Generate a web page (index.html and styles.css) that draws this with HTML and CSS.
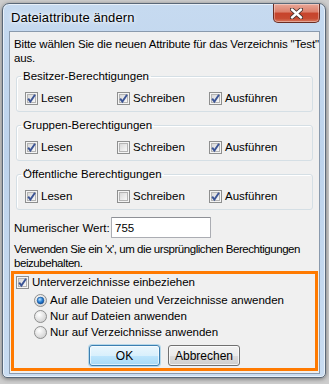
FILE: index.html
```html
<!DOCTYPE html>
<html lang="de">
<head>
  <meta charset="UTF-8" />
  <title>Dateiattribute ändern</title>
  <link rel="stylesheet" href="styles.css">
</head>
<body>

  <!-- Symbole für Checkbox / Radio -->
  <svg class="defs" width="0" height="0">
    <defs>
      <linearGradient id="boxfill" x1="0" y1="0" x2="1" y2="1">
        <stop offset="0" stop-color="#d6d6d6"/>
        <stop offset="1" stop-color="#fbfbfb"/>
      </linearGradient>
      <radialGradient id="radfill" cx="0.4" cy="0.35" r="0.7">
        <stop offset="0" stop-color="#ffffff"/>
        <stop offset="1" stop-color="#cfcfcf"/>
      </radialGradient>
      <radialGradient id="dotfill" cx="0.4" cy="0.35" r="0.7">
        <stop offset="0" stop-color="#b6e3ff"/>
        <stop offset="0.55" stop-color="#2a7fd4"/>
        <stop offset="1" stop-color="#0e4a95"/>
      </radialGradient>
      <symbol id="box" viewBox="0 0 13 13">
        <rect x="0.5" y="0.5" width="12" height="12" fill="#f4f4f4" stroke="#8e8f8f"/>
        <rect x="2.5" y="2.5" width="8" height="8" fill="url(#boxfill)" stroke="#b4b4b4"/>
      </symbol>
      <symbol id="check" viewBox="0 0 13 13">
        <use href="#box"/>
        <path d="M3.2 6.6 L5.4 9.6 L10 2.8" fill="none" stroke="#3b5495" stroke-width="1.9"/>
      </symbol>
      <symbol id="radio" viewBox="0 0 13 13">
        <circle cx="6.5" cy="6.5" r="6" fill="url(#radfill)" stroke="#8e8f8f"/>
      </symbol>
      <symbol id="radio-on" viewBox="0 0 13 13">
        <circle cx="6.5" cy="6.5" r="6" fill="url(#radfill)" stroke="#8e8f8f"/>
        <circle cx="6.5" cy="6.5" r="3.4" fill="url(#dotfill)" stroke="#174f8e" stroke-width="0.6"/>
      </symbol>
    </defs>
  </svg>

  <div class="window">

    <!-- Titelleiste -->
    <div class="titlebar">
      <span class="title">Dateiattribute ändern</span>
      <button class="close">
        <svg width="13" height="11" viewBox="0 0 13 11">
          <path d="M2 1.5 L11 9.5 M11 1.5 L2 9.5" stroke="#43302c" stroke-width="4.2" stroke-linecap="round"/>
          <path d="M2 1.5 L11 9.5 M11 1.5 L2 9.5" stroke="#ffffff" stroke-width="2.4" stroke-linecap="round"/>
        </svg>
      </button>
    </div>

    <div class="client">
      <p class="intro">Bitte wählen Sie die neuen Attribute für das Verzeichnis "Test"<br>aus.</p>

      <fieldset class="group">
        <legend>Besitzer-Berechtigungen</legend>
        <div class="perm-row">
          <label class="cb"><svg><use href="#check"/></svg>Lesen</label>
          <label class="cb"><svg><use href="#check"/></svg>Schreiben</label>
          <label class="cb"><svg><use href="#check"/></svg>Ausführen</label>
        </div>
      </fieldset>

      <fieldset class="group">
        <legend>Gruppen-Berechtigungen</legend>
        <div class="perm-row">
          <label class="cb"><svg><use href="#check"/></svg>Lesen</label>
          <label class="cb"><svg><use href="#box"/></svg>Schreiben</label>
          <label class="cb"><svg><use href="#check"/></svg>Ausführen</label>
        </div>
      </fieldset>

      <fieldset class="group">
        <legend>Öffentliche Berechtigungen</legend>
        <div class="perm-row">
          <label class="cb"><svg><use href="#check"/></svg>Lesen</label>
          <label class="cb"><svg><use href="#box"/></svg>Schreiben</label>
          <label class="cb"><svg><use href="#check"/></svg>Ausführen</label>
        </div>
      </fieldset>

      <div class="numeric">
        <span class="num-label">Numerischer Wert:</span>
        <input type="text" value="755" />
      </div>

      <p class="hint">Verwenden Sie ein 'x', um die ursprünglichen Berechtigungen<br>beizubehalten.</p>

      <!-- hervorgehobener Bereich -->
      <div class="highlight">
        <label class="cb"><svg><use href="#check"/></svg>Unterverzeichnisse einbeziehen</label>
        <div class="radios">
          <label class="rb"><svg><use href="#radio-on"/></svg>Auf alle Dateien und Verzeichnisse anwenden</label>
          <label class="rb"><svg><use href="#radio"/></svg>Nur auf Dateien anwenden</label>
          <label class="rb"><svg><use href="#radio"/></svg>Nur auf Verzeichnisse anwenden</label>
        </div>
        <div class="buttons">
          <button class="btn default">OK</button>
          <button class="btn">Abbrechen</button>
        </div>
      </div>
    </div>

  </div>

</body>
</html>
```

FILE: styles.css
```css
body {
  margin: 0;
  width: 329px;
  height: 384px;
  overflow: hidden;
  background-color: #cdcdcd;
  font-family: "Liberation Sans", Arial, sans-serif;
  font-size: 11.5px;
  color: #000;
}

.defs {
  position: absolute;
  width: 0;
  height: 0;
}

/* Fensterrahmen */
.window {
  margin: 3px 0 0 2px;
  width: 324px;
  box-sizing: border-box;
  border: 1px solid #5a6878;
  border-radius: 7px 7px 5px 5px;
  background: linear-gradient(180deg, #c6daf0 0%, #bdd3ec 40%, #c9dcf1 100%);
  box-shadow: inset 0 0 0 1px rgba(255,255,255,0.6), 0 1px 4px rgba(0,0,0,0.45);
  padding: 0 5px 3px 6px;
}

.titlebar {
  height: 27px;
  display: flex;
  align-items: flex-start;
  padding-left: 2px;
}
.title {
  align-self: center;
  font-size: 13px;
  letter-spacing: 0.1px;
  text-shadow: 0 0 6px #fff, 0 0 3px #fff;
}
.close {
  margin-left: auto;
  width: 47px;
  height: 19px;
  padding: 0;
  border: 1px solid #6b2d22;
  border-top: none;
  border-radius: 0 0 5px 5px;
  background: linear-gradient(180deg, #e9a797 0%, #dc7f6b 45%, #c7432b 50%, #c74a31 80%, #d97a5f 100%);
  box-shadow: inset 0 0 0 1px rgba(255,255,255,0.35);
  display: flex;
  justify-content: center;
  align-items: center;
}

/* Inhaltsbereich */
.client {
  background-color: #f0f0f0;
  border: 1px solid #8a9aad;
  padding: 5px 4px 2px 4px;
}

.intro {
  margin: 0;
  line-height: 14px;
  white-space: nowrap;
  letter-spacing: -0.15px;
}

.group {
  margin: 4px 2px 0 2px;
  padding: 8px 8px 6px 8px;
  border: 1px solid #d5dfe5;
  border-radius: 3px;
  box-shadow: inset 1px 1px 0 #fff;
}
.group + .group {
  margin-top: 6px;
}
.group legend {
  padding: 0 2px;
  margin-left: -4px;
  line-height: 14px;
}

.perm-row {
  display: grid;
  grid-template-columns: 92px 92px auto;
  line-height: 14px;
}

.cb, .rb {
  display: flex;
  align-items: center;
  gap: 3px;
  line-height: 14px;
}
.cb svg, .rb svg {
  width: 13px;
  height: 13px;
  flex: none;
}

/* Numerischer Wert */
.numeric {
  display: flex;
  align-items: center;
  margin-top: 7px;
}
.num-label {
  width: 97px;
  white-space: nowrap;
  padding-top: 1px;
}
.numeric input {
  width: 100px;
  height: 21px;
  box-sizing: border-box;
  border: 1px solid #abadb3;
  border-top-color: #8e9096;
  border-radius: 1px;
  padding: 0 3px;
  font-family: inherit;
  font-size: 11.5px;
  background: #fff;
  outline: none;
}

.hint {
  margin: 4px 0 0 0;
  line-height: 14px;
  white-space: nowrap;
  letter-spacing: -0.45px;
}

/* orange markierter Bereich */
.highlight {
  margin: 1px -3px 0 -3px;
  border: 3px solid #ff7a00;
  padding: 1px 2px 2px 2px;
}

.radios {
  margin-top: 3px;
  padding-left: 18px;
}
.rb {
  height: 16px;
}

.buttons {
  display: flex;
  justify-content: center;
  gap: 8px;
  margin-top: 5px;
}
.btn {
  width: 72px;
  height: 21px;
  padding: 0;
  font-family: inherit;
  font-size: 12px;
  color: #000;
  border: 1px solid #707070;
  border-radius: 3px;
  background: linear-gradient(180deg, #f2f2f2 0%, #ebebeb 50%, #dddddd 51%, #cfcfcf 100%);
  box-shadow: inset 0 0 0 1px rgba(255,255,255,0.7);
}
.btn.default {
  width: 71px;
  border-color: #3c7fb1;
  background: linear-gradient(180deg, #eaf6fd 0%, #d9f0fc 50%, #bee6fd 51%, #a7d9f5 100%);
  box-shadow: inset 0 0 0 1px rgba(255,255,255,0.6), 0 0 0 1px rgba(72,168,222,0.35);
}
```
